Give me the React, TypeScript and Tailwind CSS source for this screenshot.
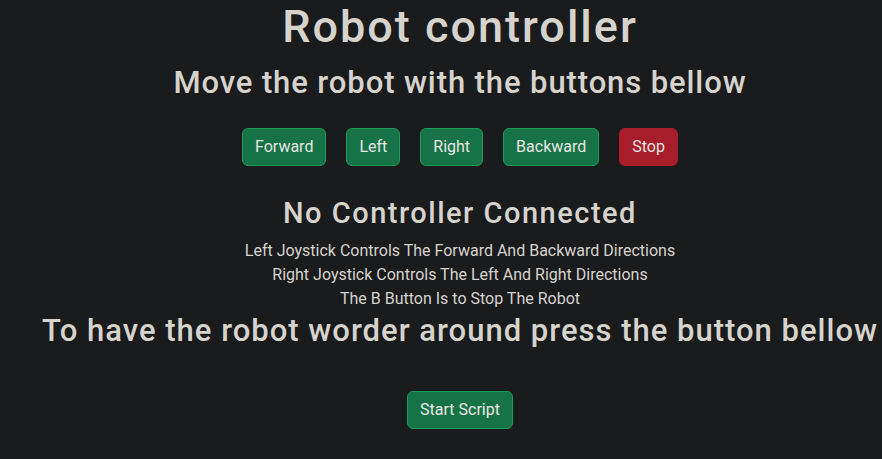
import React from 'react';

const buttons = [
  { label: 'Forward', tone: 'go' },
  { label: 'Left', tone: 'go' },
  { label: 'Right', tone: 'go' },
  { label: 'Backward', tone: 'go' },
  { label: 'Stop', tone: 'stop' },
];

const greenBtn =
  'rounded-md border border-[#1c9c5c] bg-[#157347] px-3 py-1.5 text-base leading-6 text-[#e8e6e3]';
const redBtn =
  'rounded-md border border-[#a71d2a] bg-[#a71d2a] px-3 py-1.5 text-base leading-6 text-[#e8e6e3]';

const App: React.FC = () => {
  return (
    <div
      className="min-h-screen overflow-hidden bg-[#1a1b1d] pl-[38px] text-center text-[#d6d3cd]"
      style={{ fontFamily: 'Roboto, "Noto Sans", sans-serif' }}
    >
      {/* Header */}
      <h1 className="text-[45px] font-medium leading-[54px] tracking-[2px]">Robot controller</h1>
      <h2 className="mt-[10px] text-[31px] font-medium leading-[38px] tracking-[0.9px]">
        Move the robot with the buttons bellow
      </h2>

      {/* Direction buttons */}
      <div className="mt-[26px] flex justify-center gap-5">
        {buttons.map((b) => (
          <button key={b.label} className={b.tone === 'stop' ? redBtn : greenBtn}>
            {b.label}
          </button>
        ))}
      </div>

      {/* Controller info */}
      <h3 className="mt-[30px] text-[29px] font-medium leading-[34px] tracking-[1.5px]">
        No Controller Connected
      </h3>
      <div className="mt-[9px] text-base leading-6">
        <p>Left Joystick Controls The Forward And Backward Directions</p>
        <p>Right Joystick Controls The Left And Right Directions</p>
        <p>The B Button Is to Stop The Robot</p>
      </div>

      <h2 className="mt-px whitespace-nowrap text-[31px] font-medium leading-[38px] tracking-[1px]">
        To have the robot worder around press the button bellow
      </h2>

      <div className="mt-[41px] flex justify-center">
        <button className={greenBtn}>Start Script</button>
      </div>
    </div>
  );
};

export default App;
